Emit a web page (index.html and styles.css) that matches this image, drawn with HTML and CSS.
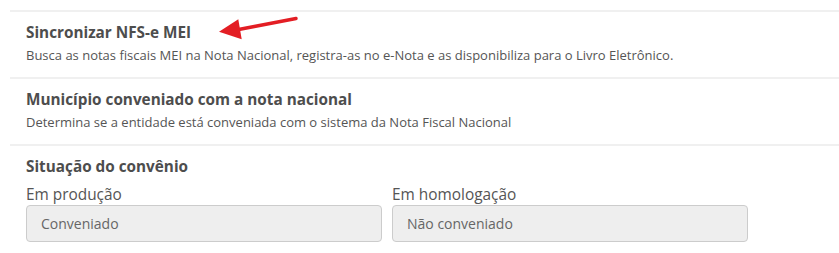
FILE: index.html
```html
<!DOCTYPE html>
<html lang="pt-BR">
<head>
<meta charset="utf-8">
<link rel="stylesheet" href="styles.css">
</head>
<body>
<div class="panel">
  <section class="row">
    <h3 class="title">Sincronizar NFS-e MEI</h3>
    <p class="desc">Busca as notas fiscais MEI na Nota Nacional, registra-as no e-Nota e as disponibiliza para o Livro Eletrônico.</p>
    <svg class="arrow" width="110" height="45" viewBox="0 0 110 45">
      <line x1="96" y1="13.5" x2="36" y2="25" stroke="#e31e24" stroke-width="3.5" stroke-linecap="round"/>
      <polygon points="19,26.7 38.3,14.3 41.7,34.3" fill="#e31e24"/>
    </svg>
  </section>
  <section class="row">
    <h3 class="title">Município conveniado com a nota nacional</h3>
    <p class="desc">Determina se a entidade está conveniada com o sistema da Nota Fiscal Nacional</p>
  </section>
  <section class="row">
    <h3 class="title">Situação do convênio</h3>
    <div class="fields">
      <label class="field">
        <span class="label">Em produção</span>
        <span class="input">Conveniado</span>
      </label>
      <label class="field">
        <span class="label">Em homologação</span>
        <span class="input">Não conveniado</span>
      </label>
    </div>
  </section>
</div>
</body>
</html>
```
FILE: styles.css
```css
* { box-sizing: border-box; }
html, body { margin: 0; padding: 0; background: #fff; }
body { font-family: "Open Sans", "Noto Sans", sans-serif; color: #555; }
.panel { padding: 10px 0 0 10px; }
.row {
  position: relative;
  border-top: 2px solid #f0f0f0;
  padding: 10px 16px 13px;
}
.title {
  margin: 0;
  font-size: 15.3px;
  line-height: 20px;
  font-weight: 700;
  color: #4d4d4d;
}
.desc {
  margin: 4px 0 0;
  font-size: 13px;
  line-height: 18px;
  color: #555;
}
.arrow { position: absolute; left: 190px; top: -7px; }
.fields { display: flex; gap: 10px; margin-top: 8px; }
.field { display: flex; flex-direction: column; width: 356px; }
.label { font-size: 15.4px; line-height: 21px; color: #555; }
.input {
  height: 37px;
  background: #eee;
  border: 1px solid #ccc;
  border-radius: 4px;
  padding: 0 14px;
  display: flex;
  align-items: center;
  font-size: 14px;
  color: #666;
}
```
